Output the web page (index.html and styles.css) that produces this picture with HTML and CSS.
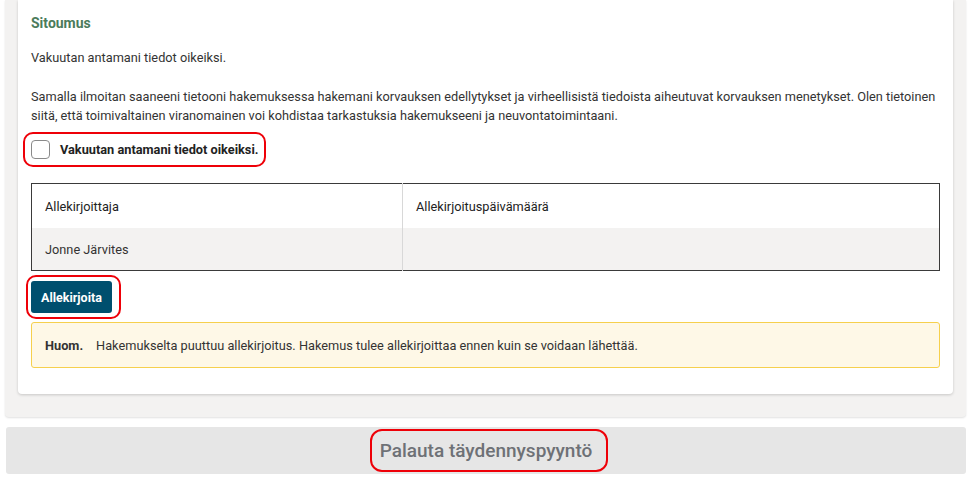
FILE: index.html
```html
<!DOCTYPE html>
<html lang="fi">
<head>
  <meta charset="UTF-8" />
  <title>Sitoumus</title>
  <link rel="stylesheet" href="styles.css">
</head>
<body>
  <div class="page">
    <div class="panel">
      <div class="card">
        <h2 class="card-title">Sitoumus</h2>
        <p class="lead">Vakuutan antamani tiedot oikeiksi.</p>
        <p class="body-text">Samalla ilmoitan saaneeni tietooni hakemuksessa hakemani korvauksen edellytykset ja virheellisistä tiedoista aiheutuvat korvauksen menetykset. Olen tietoinen siitä, että toimivaltainen viranomainen voi kohdistaa tarkastuksia hakemukseeni ja neuvontatoimintaani.</p>

        <label class="check-row marked">
          <span class="check-box"></span>
          <span class="check-label">Vakuutan antamani tiedot oikeiksi.</span>
        </label>

        <table class="sign-table">
          <thead>
            <tr>
              <th>Allekirjoittaja</th>
              <th>Allekirjoituspäivämäärä</th>
            </tr>
          </thead>
          <tbody>
            <tr>
              <td>Jonne Järvites</td>
              <td></td>
            </tr>
          </tbody>
        </table>

        <div class="sign-row">
          <button class="sign-btn marked">Allekirjoita</button>
        </div>

        <div class="notice">
          <strong>Huom.</strong>
          <span>Hakemukselta puuttuu allekirjoitus. Hakemus tulee allekirjoittaa ennen kuin se voidaan lähettää.</span>
        </div>
      </div>
    </div>

    <div class="return-bar">
      <span class="return-text marked">Palauta täydennyspyyntö</span>
    </div>
  </div>
</body>
</html>
```

FILE: styles.css
```css
body {
  margin: 0;
  background: #fff;
  color: #333;
  font-family: Roboto, 'Liberation Sans', sans-serif;
  font-size: 12.75px;
  line-height: 19px;
}

.page {
  padding: 0 7px 0 5px;
}

.panel {
  background: #f3f2f1;
  padding: 0 13px 23px 13px;
  border-radius: 0 0 4px 4px;
  box-shadow: 0 1px 2px rgba(0, 0, 0, 0.12);
}

.card {
  background: #fff;
  padding: 14px 13px 26px 13px;
  border-radius: 0 0 4px 4px;
  box-shadow: 0 1px 3px rgba(0, 0, 0, 0.18);
}

.card-title {
  margin: 0;
  font-size: 14px;
  line-height: 19px;
  font-weight: bold;
  color: #4b7b5b;
}

.lead {
  margin: 15px 0 0 0;
}

.body-text {
  margin: 20px 0 0 0;
}

/* red annotation rings */
.marked { position: relative; }
.marked::after {
  content: "";
  position: absolute;
  border: 2px solid #ee0008;
  border-radius: 10px;
  pointer-events: none;
}

.check-row {
  display: inline-flex;
  align-items: center;
  gap: 10px;
  margin-top: 15px;
  cursor: pointer;
}
.check-row::after { top: -8px; bottom: -8px; left: -8px; right: -8px; }

.check-box {
  width: 17px;
  height: 17px;
  border: 1px solid #8a8a8a;
  border-radius: 4px;
  background: #fff;
}

.check-label {
  font-weight: bold;
  color: #222;
}

.sign-table {
  width: 100%;
  margin-top: 19px;
  border-collapse: collapse;
  border: 1px solid #3a3a3a;
}
.sign-table th,
.sign-table td {
  text-align: left;
  padding: 0 13px;
  font-weight: normal;
}
.sign-table th {
  height: 44px;
  background: #fff;
  color: #222;
}
.sign-table td {
  height: 42px;
  background: #f3f2f1;
}
.sign-table th:first-child,
.sign-table td:first-child {
  width: 344px;
  border-right: 1px solid #d8d8d8;
}

.sign-row {
  margin-top: 10px;
  display: flex;
}

.sign-btn {
  height: 32px;
  padding: 0 10px;
  background: #004f6e;
  color: #fff;
  border: none;
  border-radius: 3px;
  font-family: Roboto, 'Liberation Sans', sans-serif;
  font-size: 12.5px;
  font-weight: bold;
  cursor: pointer;
}
.sign-btn::after { top: -6px; bottom: -6px; left: -5px; right: -9px; }

.notice {
  margin-top: 9px;
  height: 44px;
  display: flex;
  align-items: center;
  gap: 13px;
  padding: 0 13px;
  background: #fef8e7;
  border: 1px solid #f6d04d;
  border-radius: 3px;
}
.notice strong { color: #333; }

.return-bar {
  margin: 10px 0 0 1px;
  height: 47px;
  background: #e6e6e6;
  border-radius: 3px;
  display: flex;
  justify-content: center;
  align-items: center;
}

.return-text {
  font-size: 19px;
  font-weight: 500;
  color: #6e7176;
}
.return-text::after { top: -12px; bottom: -12px; left: -10px; right: -16px; border-radius: 12px; }
```
